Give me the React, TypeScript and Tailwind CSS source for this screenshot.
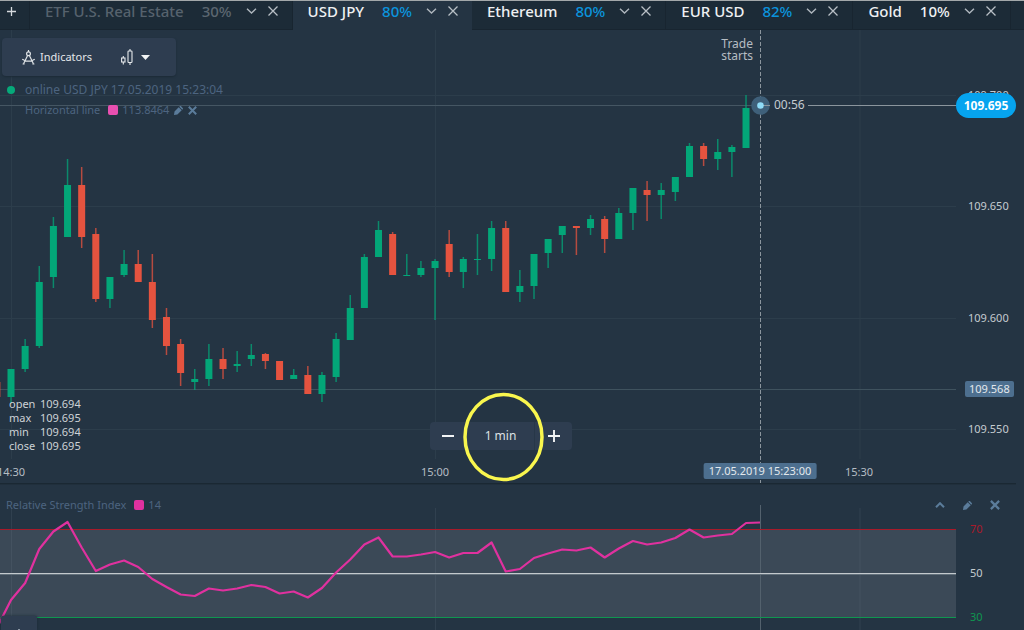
import React from "react";

type Tab = { name: string; pct: string; state: "muted" | "active" | "idle"; pctClass: string };

const TABS: Tab[] = [
  { name: "ETF U.S. Real Estate", pct: "30%", state: "muted", pctClass: "text-[#5b6670]" },
  { name: "USD JPY", pct: "80%", state: "active", pctClass: "text-[#0b93dc]" },
  { name: "Ethereum", pct: "80%", state: "idle", pctClass: "text-[#0b93dc]" },
  { name: "EUR USD", pct: "82%", state: "idle", pctClass: "text-[#0b93dc]" },
  { name: "Gold", pct: "10%", state: "idle", pctClass: "text-[#eef0f2]" },
];

// direction, body top, body bottom, wick top, wick bottom
type Candle = ["u" | "d", number, number, number, number];

const CANDLES: Candle[] = [
  ["d", 382, 397, 382, 397],
  ["u", 369, 397, 369, 403],
  ["u", 346, 369, 339, 372],
  ["u", 282, 346, 266, 348],
  ["u", 226, 277, 217, 288],
  ["u", 185, 237, 159, 237],
  ["d", 185, 237, 167, 248],
  ["d", 234, 299, 228, 302],
  ["u", 277, 299, 277, 308],
  ["u", 264, 275, 250, 277],
  ["d", 264, 282, 250, 282],
  ["d", 282, 320, 254, 328],
  ["d", 317, 346, 308, 355],
  ["d", 344, 373, 339, 386],
  ["u", 379, 382, 369, 390],
  ["u", 359, 379, 344, 386],
  ["d", 359, 369, 348, 379],
  ["u", 364, 366, 351, 372],
  ["u", 355, 359, 344, 366],
  ["d", 354, 361, 353, 369],
  ["d", 361, 380, 361, 380],
  ["u", 375, 379, 369, 379],
  ["d", 375, 394, 366, 394],
  ["u", 375, 394, 372, 402],
  ["u", 339, 377, 333, 382],
  ["u", 308, 340, 295, 340],
  ["u", 257, 308, 254, 308],
  ["u", 230, 257, 221, 257],
  ["d", 234, 275, 232, 275],
  ["u", 275, 276, 254, 276],
  ["u", 268, 275, 261, 277],
  ["u", 261, 268, 259, 320],
  ["d", 244, 272, 230, 277],
  ["u", 259, 272, 257, 288],
  ["u", 259, 260, 234, 275],
  ["u", 228, 259, 221, 271],
  ["d", 228, 292, 221, 292],
  ["u", 286, 292, 270, 302],
  ["u", 254, 286, 254, 299],
  ["u", 239, 253, 239, 268],
  ["u", 226, 235, 226, 253],
  ["d", 226, 228, 226, 255],
  ["u", 219, 228, 215, 235],
  ["d", 219, 239, 216, 253],
  ["u", 213, 239, 208, 239],
  ["u", 188, 213, 188, 230],
  ["d", 190, 195, 181, 221],
  ["u", 190, 195, 183, 219],
  ["u", 177, 192, 177, 201],
  ["u", 146, 177, 143, 177],
  ["d", 146, 159, 143, 166],
  ["u", 152, 159, 139, 170],
  ["u", 147, 152, 145, 177],
  ["u", 108, 148, 95, 148],
];

const RSI = [
  628, 600, 583, 549, 531.5, 522, 547.5, 571, 564.5, 560.5, 567, 579, 587, 594.5, 596, 588.5, 590.5, 588.5, 585,
  587, 593.5, 591.5, 597.5, 588, 572.5, 559.5, 544.5, 537.5, 556.5, 556.5, 554.5, 552, 557.5, 553, 553, 542.5, 571.5,
  569, 558, 553.5, 549.5, 550.5, 547.5, 557.5, 548.5, 541, 544.5, 542.5, 538, 529.5, 537.5, 535.5, 534, 523,
];

const PLOT_WIDTH = 956;
const STEP = 14.135;
const xAt = (i: number) => 11 + (i - 1) * STEP;
const pctX = (x: number) => `${(x / PLOT_WIDTH) * 100}%`;

const GRID_X = [11.5, 435.5, 860];
const GRID_Y = [95.5, 206.5, 318.5, 429.5];
const TIMES = [
  { label: "14:30", x: 11 },
  { label: "15:00", x: 435 },
  { label: "15:30", x: 859 },
];
const PRICES = ["109.700", "109.650", "109.600", "109.550"];
const OHLC = [
  ["open", "109.694"],
  ["max", "109.695"],
  ["min", "109.694"],
  ["close", "109.695"],
];

function ChevronDown() {
  return (
    <svg width="11" height="6" viewBox="0 0 11 6" fill="none" stroke="#aeb6bd" strokeWidth="1.4">
      <path d="M1 .7 5.5 5 10 .7" />
    </svg>
  );
}

function Cross() {
  return (
    <svg width="10" height="10" viewBox="0 0 10 10" fill="none" stroke="#b9c0c6" strokeWidth="1.3">
      <path d="M.5.5l9 9M9.5.5l-9 9" />
    </svg>
  );
}

function Plus({ size }: { size: number }) {
  return (
    <svg width={size} height={size} viewBox="0 0 12 12" stroke="#f2f4f5" strokeWidth="1.9">
      <path d="M6 0v12M0 6h12" />
    </svg>
  );
}

function Pencil() {
  return (
    <svg width="9" height="9" viewBox="0 0 9 9" fill="#5b7c9b">
      <path d="M4.7 1.3 7.7 4.3 3.4 8.5 0 9 .5 5.6zM5.3.7 5.7.3a1 1 0 0 1 1.4 0l1.6 1.6a1 1 0 0 1 0 1.4l-.4.4z" />
    </svg>
  );
}

function SmallCross({ size }: { size: number }) {
  return (
    <svg width={size} height={size} viewBox="0 0 9 9" fill="none" stroke="#5b7c9b" strokeWidth="2">
      <path d="M.8.8l7.4 7.4M8.2.8.8 8.2" />
    </svg>
  );
}

function Compass() {
  return (
    <svg width="13" height="15" viewBox="0 0 13 15" fill="none" stroke="#dfe3e6" strokeWidth="1.2">
      <path d="M6.5 0v2" />
      <circle cx="6.5" cy="3.7" r="1.9" />
      <path d="M5.6 5.5 1.7 13.6M7.4 5.5l3.9 8.1M.3 9.2c3.6 2.6 8.8 2.6 12.4 0M.6 14h2M10.4 14h2" />
    </svg>
  );
}

function CandlesIcon() {
  return (
    <svg width="12" height="16" viewBox="0 0 12 16" fill="none" stroke="#e6e9ec" strokeWidth="1.1">
      <path d="M2.3 7v2M2.3 13v2.5M9 0v2M9 13.5V16" />
      <rect x=".6" y="9" width="3.4" height="4" />
      <rect x="7" y="2" width="4" height="11.5" rx=".8" />
    </svg>
  );
}

function TabBar() {
  return (
    <nav aria-label="Assets" className="flex h-[30px] shrink-0 overflow-hidden border-t border-[#a3a8aa] bg-[#1c2b37] shadow-[inset_0_-1px_0_#182530]">
      <button aria-label="Add asset" className="flex w-[30px] shrink-0 items-center border-r border-[#182530] pb-2 pl-[7px]">
        <svg width="9" height="9" viewBox="0 0 9 9" stroke="#d6dade" strokeWidth="1.3">
          <path d="M4.5 0v9M0 4.5h9" />
        </svg>
      </button>
      {TABS.map((t) => (
        <div
          key={t.name}
          className={
            "flex shrink-0 items-center pr-[14px] pb-[9px] pl-[15px] text-[15px] leading-5 font-medium " +
            (t.state === "active" ? "bg-[#243443] text-[#eef0f2]" : t.state === "muted" ? "border-r border-[#182530] text-[#56626d]" : "border-r border-[#182530] text-[#eef0f2]")
          }
        >
          <a href="#chart" className="whitespace-nowrap">
            {t.name}
          </a>
          <span className={"ml-[18px] " + t.pctClass}>{t.pct}</span>
          <button aria-label={`${t.name} options`} className="ml-[14px]">
            <ChevronDown />
          </button>
          <button aria-label={`Close ${t.name}`} className="ml-[11px]">
            <Cross />
          </button>
        </div>
      ))}
    </nav>
  );
}

function CandleChart() {
  return (
    <svg className="absolute inset-0 h-full w-full" viewBox="0 30 956 453" preserveAspectRatio="none" aria-label="USD JPY candles">
      <g stroke="#2c3d4b">
        {GRID_X.map((x) => (
          <path key={x} d={`M${x} 30V459`} />
        ))}
        {GRID_Y.map((y) => (
          <path key={y} d={`M0 ${y}H956`} />
        ))}
      </g>
      <path d="M0 389.5H956" stroke="#3f525e" />
      <path d="M0 105.5H769" stroke="#455663" />
      <path d="M808 105.5H956" stroke="#8b959d" />
      {CANDLES.map(([dir, top, bottom, high, low], i) => {
        const x = xAt(i);
        const fill = dir === "u" ? "#03a678" : "#e5533f";
        return (
          <g key={i} fill={fill}>
            <rect x={x - 0.75} y={high} width="1.5" height={low - high} opacity=".75" />
            <rect x={x - 3.5} y={top} width="7" height={bottom - top} />
          </g>
        );
      })}
      <path d="M760.5 30V483" stroke="#8b959d" strokeDasharray="4 2" />
      <circle cx="760.5" cy="105.5" r="9.3" fill="#3f607a" />
      <path d="M760 105.5H770" stroke="#8b959d" />
      <circle cx="760.5" cy="105.5" r="3.3" fill="#8fdcf8" />
    </svg>
  );
}

function Toolbar() {
  return (
    <div className="flex h-[38px] w-[174px] items-center rounded bg-[#2e3d50] pl-5 text-[11px] text-[#e3e6e9] shadow-[0_1px_2px_#1c2b37]">
      <button className="flex items-center gap-[5px]">
        <Compass />
        <span>Indicators</span>
      </button>
      <button aria-label="Chart type" className="ml-[29px] flex items-center gap-2">
        <CandlesIcon />
        <svg width="9" height="5" viewBox="0 0 9 5" fill="#f2f4f5">
          <path d="M0 0h9L4.5 5z" />
        </svg>
      </button>
    </div>
  );
}

function TimeframeControl() {
  return (
    <div className="absolute inset-x-0 bottom-[33px] flex justify-center pr-[14px]">
      <div className="relative flex h-7 w-[142px] items-center rounded bg-[#2e3d50] text-[#dde1e4]">
        <button aria-label="Decrease interval" className="flex h-full w-9 items-center justify-center">
          <svg width="12" height="2" viewBox="0 0 12 2" fill="#f2f4f5">
            <path d="M0 0h12v2H0z" />
          </svg>
        </button>
        <span className="flex h-full flex-1 items-center justify-center border-x border-[#273748] text-xs">1 min</span>
        <button aria-label="Increase interval" className="flex h-full w-[37px] items-center justify-center">
          <Plus size={12} />
        </button>
        <svg className="pointer-events-none absolute -top-[30px] left-[33px]" width="82" height="90" viewBox="0 0 82 90" fill="none">
          <ellipse cx="40.5" cy="45" rx="38.5" ry="42.5" stroke="#f9f64e" strokeWidth="3.5" />
        </svg>
      </div>
    </div>
  );
}

function MainChart() {
  return (
    <section id="chart" className="relative mr-2 flex h-[454px] shrink-0 border-b border-[#1a2833] shadow-[0_1px_0_#202f3c]">
      <div className="relative flex-1 overflow-hidden">
        <CandleChart />
        <div className="relative flex h-full flex-col items-start pt-2 pb-[30px] pl-[2px]">
          <Toolbar />
          <div className="mt-[6px] flex items-center pl-[5px] text-xs leading-4 text-[#4d6480]">
            <span className="mr-[10px] h-2 w-2 rounded-full bg-[#06a97a]" />
            <span>online USD JPY 17.05.2019 15:23:04</span>
          </div>
          <div className="mt-1 flex items-center pl-[23px] text-[11px] leading-4 text-[#4d6480]">
            <span>Horizontal line</span>
            <span className="mr-1 ml-2 h-[10px] w-[10px] rounded-[2px] bg-[#e84fb0]" />
            <span>113.8464</span>
            <button aria-label="Edit horizontal line" className="ml-[5px]">
              <Pencil />
            </button>
            <button aria-label="Remove horizontal line" className="ml-[5px]">
              <SmallCross size={9} />
            </button>
          </div>
          <dl className="mt-auto grid grid-cols-[31px_auto] pl-[7px] text-[11px] leading-[14px] text-[#cdd2d6]">
            {OHLC.map(([k, v]) => (
              <React.Fragment key={k}>
                <dt>{k}</dt>
                <dd>{v}</dd>
              </React.Fragment>
            ))}
          </dl>
        </div>
        <p className="absolute top-2 w-10 -translate-x-full text-right text-xs leading-3 text-[#b6bdc3]" style={{ left: pctX(753) }}>
          Trade starts
        </p>
        <span className="absolute top-[67px] text-xs leading-4 text-[#c5cbd0]" style={{ left: pctX(774) }}>
          00:56
        </span>
        {TIMES.map((t) => (
          <span key={t.label} className="absolute bottom-[3px] -translate-x-1/2 text-[11px] leading-4 text-[#b6bdc3]" style={{ left: pctX(t.x) }}>
            {t.label}
          </span>
        ))}
        <span
          className="absolute bottom-1 -translate-x-1/2 rounded-[2px] bg-[#4d6f8f] px-[5px] text-[11px] leading-4 whitespace-nowrap text-[#e3e8ec]"
          style={{ left: pctX(760) }}
        >
          17.05.2019 15:23:00
        </span>
      </div>
      <div className="relative flex w-[60px] flex-col justify-between pt-[57px] pb-[46px] pl-3 text-[11px] leading-4 text-[#c5cbd0]">
        {PRICES.map((p) => (
          <span key={p}>{p}</span>
        ))}
        <span className="absolute top-[63px] left-0 flex h-[25px] w-[60px] items-center justify-center rounded-full bg-[#06a4ef] text-xs font-bold text-white">109.695</span>
        <span className="absolute top-[351px] left-[9px] rounded-[2px] bg-[#4d6f8f] px-1 text-[#e3e8ec]">109.568</span>
      </div>
      <TimeframeControl />
    </section>
  );
}

function RsiPanel() {
  const points = RSI.map((y, i) => `${xAt(i)},${y}`).join(" ") + " 760,522.5";
  return (
    <section aria-label="Relative Strength Index" className="relative flex min-h-[146px] flex-1 overflow-hidden">
      <div className="relative flex-1">
        <svg className="absolute inset-0 h-full w-full" viewBox="0 484 956 146" preserveAspectRatio="none">
          <rect y="529" width="956" height="88" fill="#3b4957" />
          <g stroke="#7d8f9d" strokeOpacity=".14">
            {GRID_X.map((x) => (
              <path key={x} d={`M${x} 508V630`} />
            ))}
          </g>
          <path d="M760.5 505V630" stroke="#53616d" />
          <path d="M0 529.5H956" stroke="#a81a2a" />
          <path d="M0 573.5H956" stroke="#c3c9cd" />
          <path d="M0 574.5H956" stroke="#62707b" />
          <path d="M0 617.5H956" stroke="#0f9650" />
          <polyline points={points} fill="none" stroke="#e0319f" strokeWidth="2.2" strokeLinejoin="round" />
        </svg>
        <div className="relative flex h-full flex-col items-start justify-between pt-[13px]">
          <div className="flex items-center pl-[6px] text-[11px] leading-4 text-[#4d6480]">
            <h2>Relative Strength Index</h2>
            <span className="mr-1 ml-2 h-[10px] w-[10px] rounded-[2px] bg-[#e0319f]" />
            <span>14</span>
          </div>
          <button aria-label="Expand panel" className="ml-px flex h-[14px] w-9 items-end justify-center rounded-t-[2px] bg-[#2e3d50] shadow-[0_0_3px_#1c2b37]">
            <svg width="2" height="1" viewBox="0 0 2 1" fill="#8b98a5">
              <path d="M0 0h2v1H0z" />
            </svg>
          </button>
        </div>
      </div>
      <div className="flex w-[68px] flex-col justify-between pt-[37px] pb-[5px] pl-[14px] text-[11px] leading-4">
        <span className="text-[#a81a2a]">70</span>
        <span className="text-[#c5cbd0]">50</span>
        <span className="text-[#0f9650]">30</span>
      </div>
      <div className="absolute top-4 right-6 flex items-center gap-[18px]">
        <button aria-label="Collapse">
          <svg width="10" height="6" viewBox="0 0 10 6" fill="none" stroke="#5b7c9b" strokeWidth="2">
            <path d="M1 5.2 5 1.2l4 4" />
          </svg>
        </button>
        <button aria-label="Edit indicator">
          <Pencil />
        </button>
        <button aria-label="Remove indicator">
          <SmallCross size={10} />
        </button>
      </div>
    </section>
  );
}

export default function App() {
  return (
    <main className="flex min-h-screen flex-col overflow-hidden bg-[#243443] font-['Noto_Sans',sans-serif]">
      <TabBar />
      <MainChart />
      <RsiPanel />
    </main>
  );
}
